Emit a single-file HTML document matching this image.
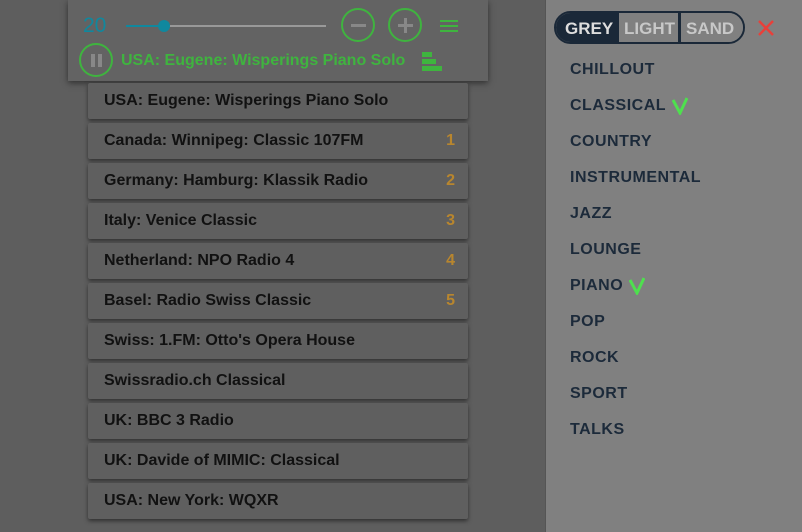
<!DOCTYPE html>
<html><head><style>
*{margin:0;padding:0;box-sizing:border-box}
body{width:802px;height:532px;background:#5e5e5e;font-family:"Liberation Sans",sans-serif;position:relative;overflow:hidden}
.hdr{position:absolute;left:68px;top:0;width:420px;height:81px;background:#636363;box-shadow:0 2px 6px rgba(0,0,0,.5)}
.item{position:absolute;left:88px;width:380px;height:36px;background:#5f5f5f;box-shadow:0 2px 4px rgba(0,0,0,.5);border-radius:2px;font-size:16px;font-weight:bold;color:#111;padding:9px 0 0 16px}
.item span{position:absolute;right:13px;top:9px;color:#b8862e}
.panel{position:absolute;left:545px;top:0;width:257px;height:532px;background:#808080;border-left:1px solid #555}
.g{position:absolute;left:24px;font-size:16px;font-weight:bold;color:#1c2a3a;letter-spacing:.5px;height:20px}
.g svg{position:absolute;top:0;margin-left:6px}
.circ{position:absolute;border:2px solid #3fb43f;border-radius:50%;width:34px;height:34px}
</style></head><body>
<div class="hdr">
 <div style="position:absolute;left:15px;top:14px;font-size:21px;color:#10889e">20</div>
 <div style="position:absolute;left:58px;top:25px;width:40px;height:2px;background:#10889e"></div>
 <div style="position:absolute;left:98px;top:25px;width:160px;height:2px;background:#999"></div>
 <div style="position:absolute;left:90px;top:20px;width:12px;height:12px;border-radius:50%;background:#10889e"></div>
 <div class="circ" style="left:273px;top:8px"><div style="position:absolute;left:8px;top:14px;width:15px;height:3px;background:#888"></div></div>
 <div class="circ" style="left:320px;top:8px"><div style="position:absolute;left:8px;top:14px;width:15px;height:3px;background:#888"></div><div style="position:absolute;left:14px;top:8px;width:3px;height:15px;background:#888"></div></div>
 <div style="position:absolute;left:372px;top:20px;width:18px;height:2px;background:#3fb43f;box-shadow:0 5px 0 #3fb43f,0 10px 0 #3fb43f"></div>
 <div class="circ" style="left:11px;top:43px"><div style="position:absolute;left:10px;top:9px;width:4px;height:13px;background:#888"></div><div style="position:absolute;left:17px;top:9px;width:4px;height:13px;background:#888"></div></div>
 <div style="position:absolute;left:53px;top:52px;font-size:16px;font-weight:bold;color:#3fb43f">USA: Eugene: Wisperings Piano Solo</div>
 <div style="position:absolute;left:354px;top:52px;width:10px;height:5px;background:#3fb43f"></div>
 <div style="position:absolute;left:354px;top:59px;width:14px;height:5px;background:#3fb43f"></div>
 <div style="position:absolute;left:354px;top:66px;width:20px;height:5px;background:#3fb43f"></div>
</div>
<div class="item" style="top:83px">USA: Eugene: Wisperings Piano Solo</div>
<div class="item" style="top:123px">Canada: Winnipeg: Classic 107FM<span>1</span></div>
<div class="item" style="top:163px">Germany: Hamburg: Klassik Radio<span>2</span></div>
<div class="item" style="top:203px">Italy: Venice Classic<span>3</span></div>
<div class="item" style="top:243px">Netherland: NPO Radio 4<span>4</span></div>
<div class="item" style="top:283px">Basel: Radio Swiss Classic<span>5</span></div>
<div class="item" style="top:323px">Swiss: 1.FM: Otto's Opera House</div>
<div class="item" style="top:363px">Swissradio.ch Classical</div>
<div class="item" style="top:403px">UK: BBC 3 Radio</div>
<div class="item" style="top:443px">UK: Davide of MIMIC: Classical</div>
<div class="item" style="top:483px">USA: New York: WQXR</div>
<div class="panel">
 <div style="position:absolute;left:8px;top:11px;width:191px;height:33px;border:2px solid #1a2838;border-radius:17px;overflow:hidden;display:flex;font-size:17px;font-weight:bold">
  <div style="width:63px;background:#1a2838;color:#ddd;padding:6px 0 0 9px">GREY</div>
  <div style="width:62px;background:#808080;color:#c8c8c8;padding:6px 0 0 5px;border-right:3px solid #1a2838">LIGHT</div>
  <div style="flex:1;background:#808080;color:#c8c8c8;padding:6px 0 0 5px">SAND</div>
 </div>
 <svg style="position:absolute;left:212px;top:20px" width="16" height="16"><path d="M1 1L15 15M15 1L1 15" stroke="#e8403a" stroke-width="2.5"/></svg>
 <div class="g" style="top:61px">CHILLOUT</div>
 <div class="g" style="top:97px">CLASSICAL<svg width="16" height="18" viewBox="0 0 16 18"><path d="M1 3L8 16L15 1" stroke="#4ee04e" stroke-width="3" fill="none"/></svg></div>
 <div class="g" style="top:133px">COUNTRY</div>
 <div class="g" style="top:169px">INSTRUMENTAL</div>
 <div class="g" style="top:205px">JAZZ</div>
 <div class="g" style="top:241px">LOUNGE</div>
 <div class="g" style="top:277px">PIANO<svg width="16" height="18" viewBox="0 0 16 18"><path d="M1 3L8 16L15 1" stroke="#4ee04e" stroke-width="3" fill="none"/></svg></div>
 <div class="g" style="top:313px">POP</div>
 <div class="g" style="top:349px">ROCK</div>
 <div class="g" style="top:385px">SPORT</div>
 <div class="g" style="top:421px">TALKS</div>
</div>
</body></html>
